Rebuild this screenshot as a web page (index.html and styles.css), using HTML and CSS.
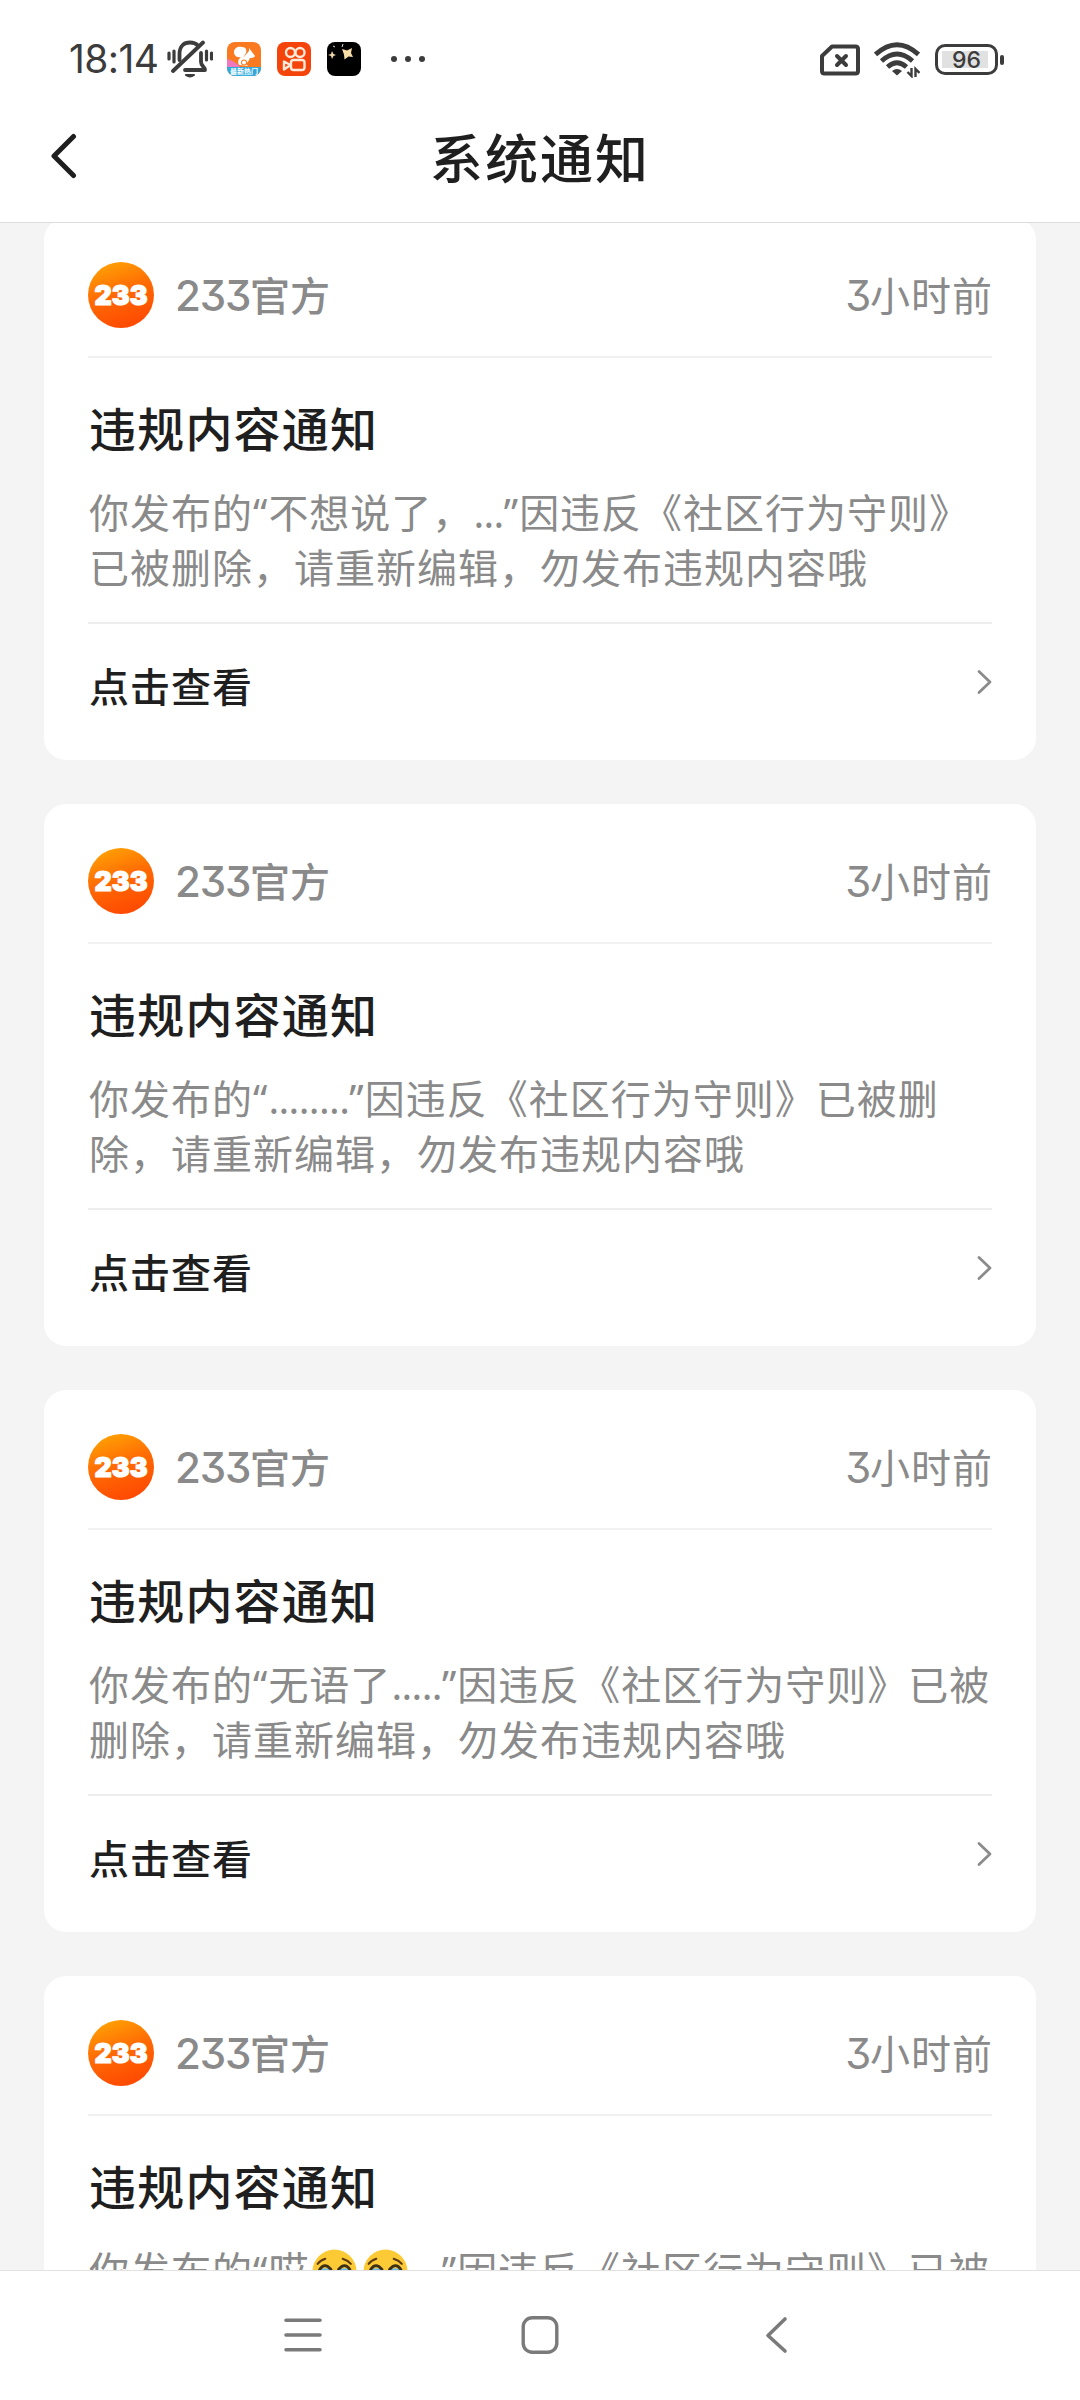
FILE: index.html
```html
<!DOCTYPE html>
<html lang="zh-CN">
<head>
<meta charset="utf-8">
<title>系统通知</title>
<link rel="stylesheet" href="styles.css">
</head>
<body>
<svg class="defs" aria-hidden="true">
  <defs>
    <linearGradient id="badge" x1="0.2" y1="0" x2="0.55" y2="1">
      <stop offset="0" stop-color="#ffa404"/><stop offset="0.5" stop-color="#ff6a04"/><stop offset="1" stop-color="#fe4a02"/>
    </linearGradient>
    <symbol id="arrow" viewBox="0 0 16 26"><path d="M2 2.5 13 13 2 23.500" fill="none" stroke="#8c8c8c" stroke-width="2.8" stroke-linecap="round" stroke-linejoin="round"/></symbol>
    <symbol id="tears" viewBox="0 0 44 44">
      <circle cx="22" cy="22" r="21.500" fill="#fbca35"/>
      <path d="M5.500 14.500Q8 11 13 9.500M30 9.500Q35 11 38 14.500" fill="none" stroke="#5d3a14" stroke-width="2" stroke-linecap="round"/>
      <path d="M9 19h9v14H9zM27 19h9v14h-9z" fill="#6dbcf0"/>
      <path d="M7.500 20Q12.500 12.500 18.500 20M26 20Q32 12.500 37 20" fill="none" stroke="#3d3016" stroke-width="2.800" stroke-linecap="round"/>
    </symbol>
  </defs>
</svg>
<div class="screen">
  <header class="top">
    <div class="status">
      <div class="status-left">
        <span class="clock">18:14</span>
        <svg class="bell" viewBox="0 0 46 38" width="46" height="38" fill="none" stroke="#3c3c3c" stroke-width="3.800" stroke-linecap="round" stroke-linejoin="round">
          <path d="M12.500 20V14C12.500 6 17 2.500 23 2.500c3.500 0 6 1 8 3M34 13v9c0 4 4 5 4 8H18"/>
          <path d="M36 2.500 6 31"/><path d="M2 13v6M7 11v11M39.500 11v9M44.500 13v6" stroke-width="3.200"/>
          <path d="M19 35h8q-4 3-8 0" stroke-width="2"/>
        </svg>
        <svg class="app" viewBox="0 0 34 34" width="34" height="34">
          <defs><clipPath id="rc"><rect width="34" height="34" rx="8"/></clipPath></defs>
          <g clip-path="url(#rc)"><rect width="34" height="34" fill="#f97a21"/><path d="M0 17q8 2 14 9H0z" fill="#ee79c0"/><path d="M0 25h34v9H0z" fill="#30a9dd"/>
          <path d="M12 23c-2-4 0-6 2-8-5 1-7-2-7-5 0-4 4-6 8-5 4 0 5 3 4 6l-3 5 6-7V6l3 4 3 4q-1 2-5 2-1 3-4 6l2 2z" fill="#fff"/><circle cx="17" cy="20.500" r="3" fill="#f97a21"/><circle cx="17" cy="20.500" r="2" fill="#fff"/></g>
          <text x="17" y="32" class="tiny">最新热门</text>
        </svg>
        <svg class="app" viewBox="0 0 34 34" width="34" height="34">
          <rect width="34" height="34" rx="8" fill="#f4440c"/>
          <g fill="none" stroke="#ffe9d8" stroke-width="2.400" stroke-linejoin="round"><circle cx="13.500" cy="10.500" r="4.500"/><circle cx="23" cy="10.500" r="4.500"/><rect x="14" y="18" width="13.500" height="10" rx="2.500"/><path d="M13.500 23 7 19.500v8z"/></g>
        </svg>
        <svg class="app" viewBox="0 0 34 34" width="34" height="34">
          <rect width="34" height="34" rx="8" fill="#000"/>
          <path d="M15 7l5 1.500 5-2.500-1 5 2 4-4.500-.5-4 3-.5-5z" fill="#f8dfa8"/><path d="M5 9l1.500 3L9 13l-2.500 1L5 17l-1-3-3-1 3-1z" fill="#efd6ac"/><path d="M6 4l2 1M16 2l-1 3" stroke="#ddd" stroke-width="1"/>
        </svg>
        <svg class="more" viewBox="0 0 36 8" width="36" height="8" fill="#3c3c3c"><circle cx="4" cy="4" r="3"/><circle cx="18" cy="4" r="3"/><circle cx="32" cy="4" r="3"/></svg>
      </div>
      <div class="status-right">
        <svg class="sim" viewBox="0 0 40 32" width="40" height="32" fill="none" stroke="#3c3c3c" stroke-linejoin="round" stroke-linecap="round"><path stroke-width="4" d="M12 2.500h23.500q2.500 0 2.500 2.500v22q0 2.500-2.500 2.500h-31Q2 29.500 2 27V12z"/><path stroke-width="4" d="M17 12l9 9M26 12l-9 9"/></svg>
        <svg class="wifi" viewBox="0 0 46 36" width="46" height="36" fill="none" stroke="#3c3c3c" stroke-width="4.800"><path d="M1.500 12.500Q23-7 44.500 12.500M7.500 19Q23 5 38.500 19M13.500 25Q23 16.500 32.500 25"/><path d="M18 29q5-4 10 0l-5 4.500z" fill="#3c3c3c" stroke="none"/><path d="M37.500 26v8l-4-4M41.500 35v-8l4 4" stroke-width="2.400"/></svg>
        <div class="battery"><span>96</span></div><i class="cap"></i>
      </div>
    </div>
    <div class="navbar">
      <svg class="back" viewBox="0 0 28 46" width="28" height="46"><path d="M23.500 3.500 4 23l19.500 19.500" fill="none" stroke="#1e1e1e" stroke-width="5" stroke-linecap="round" stroke-linejoin="round"/></svg>
      <h1>系统通知</h1>
    </div>
  </header>
  <main class="list">
    <article class="card">
      <div class="from"><svg class="avatar" viewBox="0 0 66 66"><circle cx="33" cy="33" r="33" fill="url(#badge)"/><text x="33" y="43" class="logo" textLength="53" lengthAdjust="spacingAndGlyphs">233</text></svg><span class="name"><b>233</b>官方</span><time><b>3</b>小时前</time></div>
      <div class="body"><h2>违规内容通知</h2><p>你发布的<q>“</q>不想说了，<i>...</i><q>”</q>因违反《社区行为守则》<br>已被删除，请重新编辑，勿发布违规内容哦</p></div>
      <div class="action"><span>点击查看</span><svg class="go"><use href="#arrow"/></svg></div>
    </article>
    <article class="card">
      <div class="from"><svg class="avatar" viewBox="0 0 66 66"><circle cx="33" cy="33" r="33" fill="url(#badge)"/><text x="33" y="43" class="logo" textLength="53" lengthAdjust="spacingAndGlyphs">233</text></svg><span class="name"><b>233</b>官方</span><time><b>3</b>小时前</time></div>
      <div class="body"><h2>违规内容通知</h2><p>你发布的<q>“</q><i>........</i><q>”</q>因违反《社区行为守则》已被删<br>除，请重新编辑，勿发布违规内容哦</p></div>
      <div class="action"><span>点击查看</span><svg class="go"><use href="#arrow"/></svg></div>
    </article>
    <article class="card">
      <div class="from"><svg class="avatar" viewBox="0 0 66 66"><circle cx="33" cy="33" r="33" fill="url(#badge)"/><text x="33" y="43" class="logo" textLength="53" lengthAdjust="spacingAndGlyphs">233</text></svg><span class="name"><b>233</b>官方</span><time><b>3</b>小时前</time></div>
      <div class="body"><h2>违规内容通知</h2><p>你发布的<q>“</q>无语了<i>.....</i><q>”</q>因违反《社区行为守则》已被<br>删除，请重新编辑，勿发布违规内容哦</p></div>
      <div class="action"><span>点击查看</span><svg class="go"><use href="#arrow"/></svg></div>
    </article>
    <article class="card">
      <div class="from"><svg class="avatar" viewBox="0 0 66 66"><circle cx="33" cy="33" r="33" fill="url(#badge)"/><text x="33" y="43" class="logo" textLength="53" lengthAdjust="spacingAndGlyphs">233</text></svg><span class="name"><b>233</b>官方</span><time><b>3</b>小时前</time></div>
      <div class="body"><h2>违规内容通知</h2><p>你发布的<q>“</q>哎<svg class="emoji"><use href="#tears"/></svg><svg class="emoji"><use href="#tears"/></svg><i>...</i><q>”</q>因违反《社区行为守则》已被</p></div>
    </article>
  </main>
  <nav class="keys">
    <svg viewBox="0 0 40 40" width="40" height="40" fill="none" stroke="#7a7a7a" stroke-width="3.600" stroke-linecap="round"><path d="M3 5.200h34M3 20h34M3 34.800h34"/></svg>
    <svg viewBox="0 0 40 40" width="40" height="40" fill="none" stroke="#7a7a7a" stroke-width="3.400"><rect x="3.200" y="2.700" width="33.600" height="34.600" rx="9"/></svg>
    <svg viewBox="0 0 40 40" width="40" height="40" fill="none" stroke="#7a7a7a" stroke-width="3.600" stroke-linecap="round" stroke-linejoin="round"><path d="M28 4 11 20.500 28 36"/></svg>
  </nav>
</div>
</body>
</html>
```

FILE: styles.css
```css
* { box-sizing: border-box; }
body { margin: 0; font-family: "Noto Sans", "Noto Sans CJK SC", sans-serif; color: #1f1f1f; }
.defs { position: absolute; width: 0; height: 0; }
.screen { width: 1080px; height: 2400px; display: flex; flex-direction: column; overflow: hidden; background: #f4f4f4; }
.top { height: 223px; flex: none; background: #fff; border-bottom: 1px solid #dcdcdc; }
.status { height: 117px; display: flex; justify-content: space-between; padding: 0 76px 0 69px; color: #3c3c3c; }
.status-left, .status-right { display: flex; align-items: center; }
.status-right { padding-top: 2px; }
.clock { width: 90px; font: 400 39px/40px Inter, sans-serif; letter-spacing: -0.6px; white-space: nowrap; }
.bell { margin-left: 8px; }
.bell + .app { margin-left: 14px; }
.app { margin-top: 1px; }
.app + .app { margin-left: 16px; }
.more { margin-left: 29px; }
.tiny { font: 700 7px "Noto Sans CJK SC", sans-serif; fill: #fff; text-anchor: middle; }
.wifi { margin-left: 14px; }
.battery { width: 63px; height: 31px; margin-left: 15px; padding: 3px; border: 3.5px solid #3c3c3c; border-radius: 10px; display: flex; justify-content: center; align-items: center; background: linear-gradient(#e1e1e1, #e1e1e1) 4px center / 46px 17px no-repeat; font: 500 23px/24px Inter, sans-serif; }
.cap { width: 4px; height: 10px; margin-left: 2px; border-radius: 2px; background: #3c3c3c; }
.navbar { height: 78px; display: flex; align-items: center; position: relative; }
.back { margin-left: 50px; }
.navbar h1 { margin: 0; position: absolute; left: 0; right: 0; text-align: center; font: 500 53px/78px "Noto Sans CJK SC", sans-serif; letter-spacing: 2px; }
.list { flex: 1; min-height: 0; overflow: hidden; padding: 0 44px; display: flex; flex-direction: column; gap: 44px; }
.card { flex: none; height: 542px; padding: 0 44px; background: #fff; border-radius: 22px; }
.card:first-child { margin-top: -5px; }
.from { height: 140px; padding-top: 15px; display: flex; align-items: center; border-bottom: 2px solid #f1f1f1; }
.avatar { width: 66px; height: 66px; }
.logo { font: 900 27px Inter, sans-serif; fill: #fff; stroke: #fff; stroke-width: 1.2px; text-anchor: middle; }
.name, time { color: #8a8a8a; font: 500 40px/60px "Noto Sans CJK SC", sans-serif; }
.name { margin-left: 21px; }
.name b, time b { font: 500 42px/60px Inter, sans-serif; font-feature-settings: "cv09"; letter-spacing: -1.2px; }
time { margin-left: auto; font-weight: 400; font-size: 40px; letter-spacing: 1px; margin-right: -1px; }
time b { font-weight: 400; }
.body { height: 266px; padding-top: 33px; border-bottom: 2px solid #ededed; }
.body h2 { margin: 0; font: 500 47px/72px "Noto Sans CJK SC", sans-serif; letter-spacing: 1.2px; padding-left: 1px; }
.body p { margin: 22px 0 0 1px; font-size: 40px; line-height: 55px; letter-spacing: 1px; color: #8a8a8a; white-space: nowrap; }
.body i { font-style: normal; letter-spacing: -0.6px; }
.body q { quotes: none; letter-spacing: 1px; }
.emoji { width: 45px; height: 45px; margin: 0 3px; vertical-align: -8px; }
.action { height: 136px; display: flex; justify-content: space-between; font: 500 40px/60px "Noto Sans CJK SC", sans-serif; letter-spacing: 1px; padding: 31px 0 0 1px; }
.go { width: 16px; height: 26px; margin: 14px -1px 0 0; }
.keys { height: 130px; flex: none; background: #fff; border-top: 1px solid #e2e2e2; display: flex; justify-content: center; align-items: center; gap: 197px; padding-bottom: 1px; }
```
